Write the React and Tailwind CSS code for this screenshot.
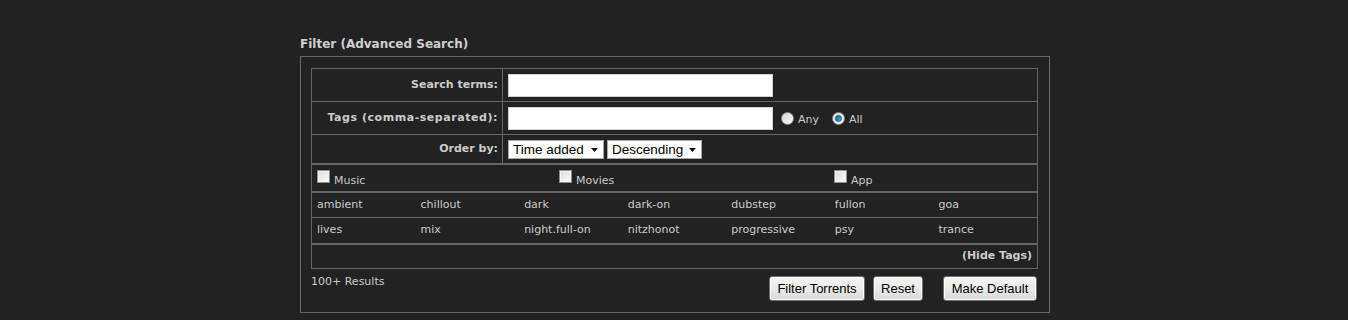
import React from "react";

const vf = { fontFamily: '"DejaVu Sans", Verdana, sans-serif' };
const af = { fontFamily: '"Liberation Sans", Arial, sans-serif' };

function Checkbox() {
  return (
    <span className="inline-block w-[13px] h-[13px] border border-[#8e8f8f] bg-gradient-to-br from-[#dcdcdc] to-[#fbfbfb] shadow-[inset_0_0_0_1px_#f4f4f4] align-middle" />
  );
}

function Radio({ checked }) {
  return (
    <span className="inline-flex items-center justify-center w-[13px] h-[13px] rounded-full border border-[#8f8f8f] bg-gradient-to-br from-[#d6d6d6] to-[#fafafa]">
      {checked && (
        <span className="w-[7px] h-[7px] rounded-full bg-gradient-to-br from-[#1f5d8c] to-[#4fb2e6] border border-[#1b4f78]" />
      )}
    </span>
  );
}

function Select({ label, w }) {
  return (
    <div
      className={`flex items-center justify-between h-[19px] bg-white border border-[#a9a9a9] pl-[4px] pr-[5px] text-black text-[13.5px] leading-none ${w}`}
      style={af}
    >
      <span>{label}</span>
      <svg width="7" height="4" viewBox="0 0 7 4">
        <path d="M0 0 L7 0 L3.5 4 Z" fill="#111" />
      </svg>
    </div>
  );
}

function Btn({ children, w, className = "" }) {
  return (
    <button
      className={`h-[25px] ${w} rounded-[3px] border border-[#707070] bg-gradient-to-b from-[#f4f4f4] via-[#ebebeb] to-[#d9d9d9] text-black text-[13px] leading-none shadow-[inset_0_0_0_1px_#fcfcfc] ${className}`}
      style={af}
    >
      {children}
    </button>
  );
}

const tags1 = ["ambient", "chillout", "dark", "dark-on", "dubstep", "fullon", "goa"];
const tags2 = ["lives", "mix", "night.full-on", "nitzhonot", "progressive", "psy", "trance"];

export default function App() {
  return (
    <div className="min-h-[320px] bg-[#222222] text-[#cccccc] text-[11px]" style={vf}>
      <div className="ml-[300px] w-[750px] pt-[37px]">
        <div className="font-bold text-[12px] leading-[15px] mb-[4px] text-[#cfcfcf]">
          Filter (Advanced Search)
        </div>
        <div className="border border-[#6a6a6a] pt-[11px] pl-[10px] pr-[11px] pb-[11px]">
          {/* section 1 */}
          <div className="border border-[#666]">
            <div className="flex h-[33px] border-b border-[#666]">
              <div className="w-[191px] border-r border-[#666] flex items-center justify-end pr-[4px] font-bold">
                Search terms:
              </div>
              <div className="flex items-center pl-[5px]">
                <div className="w-[265px] h-[23px] bg-white border border-[#d0d0d0]" />
              </div>
            </div>
            <div className="flex h-[33px] border-b border-[#666]">
              <div className="w-[191px] border-r border-[#666] flex items-center justify-end pr-[4px] font-bold tracking-[0.55px]">
                Tags (comma-separated):
              </div>
              <div className="flex items-center pl-[5px]">
                <div className="w-[265px] h-[23px] bg-white border border-[#d0d0d0]" />
                <div className="flex items-center ml-[8px] mt-[1px]">
                  <Radio />
                  <span className="ml-[4px] mt-[3px]">Any</span>
                  <span className="ml-[13px] flex items-center">
                    <Radio checked />
                  </span>
                  <span className="ml-[4px] mt-[3px]">All</span>
                </div>
              </div>
            </div>
            <div className="flex h-[28px]">
              <div className="w-[191px] border-r border-[#666] flex items-center justify-end pr-[4px] font-bold">
                Order by:
              </div>
              <div className="flex items-center pl-[5px] gap-[3px] mt-[1px]">
                <Select label="Time added" w="w-[96px]" />
                <Select label="Descending" w="w-[95px]" />
              </div>
            </div>
          </div>
          {/* categories */}
          <div className="border border-[#666] grid grid-cols-[242px_275px_1fr] h-[28px]">
            <div className="flex items-start pl-[5px] pt-[5px]">
              <Checkbox />
              <span className="ml-[4px] mt-[4px] leading-[13px]">Music</span>
            </div>
            <div className="flex items-start pl-[5px] pt-[5px]">
              <Checkbox />
              <span className="ml-[4px] mt-[4px] leading-[13px]">Movies</span>
            </div>
            <div className="flex items-start pl-[5px] pt-[5px]">
              <Checkbox />
              <span className="ml-[4px] mt-[4px] leading-[13px]">App</span>
            </div>
          </div>
          {/* tags */}
          <div className="border border-[#666]">
            <div className="grid grid-cols-7 h-[25px] border-b border-[#666]">
              {tags1.map((t) => (
                <div key={t} className="pl-[5px] flex items-center">{t}</div>
              ))}
            </div>
            <div className="grid grid-cols-7 h-[25px]">
              {tags2.map((t) => (
                <div key={t} className="pl-[5px] flex items-center">{t}</div>
              ))}
            </div>
          </div>
          <div className="border border-[#666] h-[25px] flex items-center justify-end pr-[5px] font-bold">
            (Hide Tags)
          </div>
          <div className="flex items-start mt-[7px]">
            <div className="leading-[13px] -mt-[1px] ml-[0px]">100+ Results</div>
            <div className="ml-auto flex items-center mr-[1px]">
              <Btn w="w-[96px]">Filter Torrents</Btn>
              <Btn w="w-[50px]" className="ml-[8px]">Reset</Btn>
              <Btn w="w-[94px]" className="ml-[20px]">Make Default</Btn>
            </div>
          </div>
        </div>
      </div>
    </div>
  );
}
